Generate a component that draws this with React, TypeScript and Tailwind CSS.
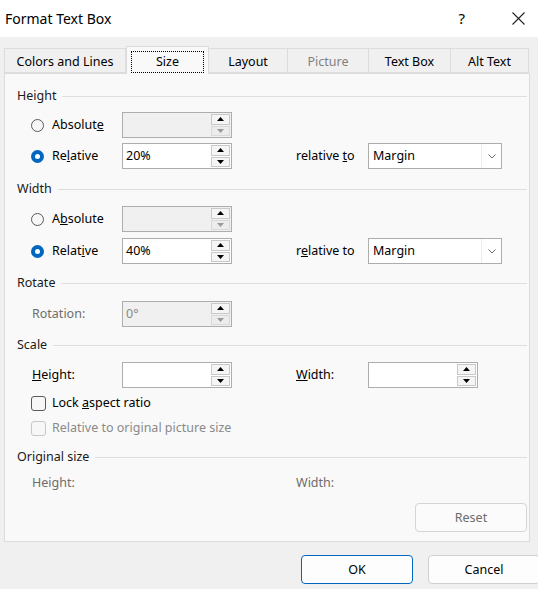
import React from "react";

function Up({ color = "#000" }: { color?: string }) {
  return (
    <svg width="7" height="4" viewBox="0 0 7 4">
      <path d="M0 4 L3.5 0 L7 4 Z" fill={color} />
    </svg>
  );
}
function Down({ color = "#000" }: { color?: string }) {
  return (
    <svg width="7" height="4" viewBox="0 0 7 4">
      <path d="M0 0 L3.5 4 L7 0 Z" fill={color} />
    </svg>
  );
}

function Spin({ disabled = false }: { disabled?: boolean }) {
  return (
    <div className="flex flex-col w-[19px] h-[22px] gap-px">
      <div className="flex-1 flex items-center justify-center border border-[#c9c9c9] bg-[#f5f5f5]">
        <Up />
      </div>
      <div
        className={
          disabled
            ? "flex-1 flex items-center justify-center border border-[#d9d9d9] bg-[#ececec]"
            : "flex-1 flex items-center justify-center border border-[#c9c9c9] bg-[#f5f5f5]"
        }
      >
        <Down color={disabled ? "#9a9a9a" : "#000"} />
      </div>
    </div>
  );
}

function SpinInput({ value = "", disabled = false, grey = false }: { value?: string; disabled?: boolean; grey?: boolean }) {
  return (
    <div
      className={
        disabled
          ? "w-[110px] h-[26px] border border-[#adadad] bg-[#f0f0f0] flex items-center pl-[3px] pr-[1px]"
          : "w-[110px] h-[26px] border border-[#adadad] bg-white flex items-center pl-[3px] pr-[1px]"
      }
    >
      <span className={grey ? "flex-1 text-[#8a8a8a]" : "flex-1 text-black"}>{value}</span>
      <Spin disabled={disabled} />
    </div>
  );
}

function Radio({ checked }: { checked: boolean }) {
  return checked ? (
    <div className="w-[13px] h-[13px] rounded-full bg-[#0067c0] flex items-center justify-center">
      <div className="w-[5px] h-[5px] rounded-full bg-white" />
    </div>
  ) : (
    <div className="w-[13px] h-[13px] rounded-full border border-[#5a5a5a] bg-[#f7f7f7]" />
  );
}

function Header({ children }: { children: React.ReactNode }) {
  return (
    <div className="flex items-center h-[26px] pl-[12px] pr-[2px]">
      <span className="text-[#1a1a1a]">{children}</span>
      <div className="flex-1 h-px bg-[#dedede] ml-[6px]" />
    </div>
  );
}

function Dropdown() {
  return (
    <div className="w-[134px] h-[26px] border border-[#adadad] bg-white flex items-center pl-[4px]">
      <span className="flex-1 text-black">Margin</span>
      <div className="w-[20px] h-[24px] border-l border-[#ececec] flex items-center justify-center">
        <svg width="8" height="5" viewBox="0 0 8 5">
          <path d="M0.5 0.5 L4 4 L7.5 0.5" fill="none" stroke="#6a6a6a" strokeWidth="1" />
        </svg>
      </div>
    </div>
  );
}

function RadioRow({
  checked,
  label,
  value,
  disabled,
  mt,
  relLabel,
}: {
  checked: boolean;
  label: React.ReactNode;
  value?: string;
  disabled?: boolean;
  mt: string;
  relLabel?: React.ReactNode;
}) {
  return (
    <div className={"flex items-center h-[26px] " + mt}>
      <div className="w-[26px]" />
      <Radio checked={checked} />
      <div className="w-[8px]" />
      <span className="w-[70px] text-black">{label}</span>
      <SpinInput value={value} disabled={disabled} />
      {relLabel ? (
        <>
          <div className="w-[64px]" />
          <span className="w-[72px] text-black">{relLabel}</span>
          <Dropdown />
        </>
      ) : null}
    </div>
  );
}

function Checkbox({ disabled = false }: { disabled?: boolean }) {
  return (
    <div
      className={
        disabled
          ? "w-[15px] h-[15px] rounded-[3px] border border-[#c8c8c8] bg-[#f7f7f7]"
          : "w-[15px] h-[15px] rounded-[3px] border border-[#5a5a5a] bg-[#f7f7f7]"
      }
    />
  );
}

export default function App() {
  const tabs: { label: string; w: string; selected?: boolean; disabled?: boolean }[] = [
    { label: "Colors and Lines", w: "w-[122px]" },
    { label: "Size", w: "w-[83px]", selected: true },
    { label: "Layout", w: "w-[79px]" },
    { label: "Picture", w: "w-[81px]", disabled: true },
    { label: "Text Box", w: "w-[82px]" },
    { label: "Alt Text", w: "w-[78px]" },
  ];
  return (
    <div className="w-[538px] h-[589px] overflow-hidden bg-[#f0f0f0] flex flex-col font-['Noto_Sans',sans-serif] text-[12.5px] leading-none">
      {/* Title bar */}
      <div className="h-[37px] bg-white flex items-center shrink-0">
        <span className="ml-[5px] text-[14px] text-black">Format Text Box</span>
        <div className="flex-1" />
        <span className="text-[15px] text-black mr-[47px]">?</span>
        <svg width="13" height="13" viewBox="0 0 13 13" className="mr-[13px]">
          <path d="M0.5 0.5 L12.5 12.5 M12.5 0.5 L0.5 12.5" stroke="#222" strokeWidth="1.1" />
        </svg>
      </div>

      {/* Tabs */}
      <div className="flex items-start ml-[4px] mt-[9px] h-[27px] shrink-0 relative z-10">
        {tabs.map((t) =>
          t.selected ? (
            <div
              key={t.label}
              className={t.w + " h-[28px] bg-[#f9f9f9] border border-b-0 border-[#dcdcdc] flex items-center justify-center pt-[2px]"}
            >
              <div className="w-[73px] h-[22px] border border-dotted border-black flex items-center justify-center text-black pt-[1px]">
                {t.label}
              </div>
            </div>
          ) : (
            <div
              key={t.label}
              className={
                t.w +
                " h-[25px] mt-[2px] pt-[3px] bg-[#f0f0f0] border border-[#dcdcdc] border-l-0 first:border-l flex items-center justify-center " +
                (t.disabled ? "text-[#808080]" : "text-black")
              }
            >
              {t.label}
            </div>
          )
        )}
      </div>

      {/* Panel */}
      <div className="ml-[4px] w-[526px] h-[469px] shrink-0 border border-[#dcdcdc] bg-[#f9f9f9] flex flex-col pt-[9px]">
        <Header>Height</Header>
        <RadioRow
          checked={false}
          mt="mt-[3px]"
          disabled
          label={
            <>
              Absolut<u>e</u>
            </>
          }
        />
        <RadioRow
          checked
          mt="mt-[5px]"
          value="20%"
          label={
            <>
              Re<u>l</u>ative
            </>
          }
          relLabel={
            <>
              relative <u>t</u>o
            </>
          }
        />

        <div className="mt-[7px]">
          <Header>Width</Header>
        </div>
        <RadioRow
          checked={false}
          mt="mt-[4px]"
          disabled
          label={
            <>
              A<u>b</u>solute
            </>
          }
        />
        <RadioRow
          checked
          mt="mt-[6px]"
          value="40%"
          label={
            <>
              Relat<u>i</u>ve
            </>
          }
          relLabel={
            <>
              r<u>e</u>lative to
            </>
          }
        />

        <div className="mt-[6px]">
          <Header>Rotate</Header>
        </div>
        <div className="flex items-center h-[26px] mt-[5px]">
          <div className="w-[27px]" />
          <span className="w-[90px] text-[#6d6d6d]">Rotation:</span>
          <SpinInput value="0°" disabled grey />
        </div>

        <div className="mt-[5px]">
          <Header>Scale</Header>
        </div>
        <div className="flex items-center h-[26px] mt-[4px]">
          <div className="w-[27px]" />
          <span className="w-[90px] text-black">
            <u>H</u>eight:
          </span>
          <SpinInput />
          <div className="w-[64px]" />
          <span className="w-[72px] text-black">
            <u>W</u>idth:
          </span>
          <SpinInput />
        </div>
        <div className="flex items-center h-[22px] mt-[4px]">
          <div className="w-[26px]" />
          <Checkbox />
          <div className="w-[6px]" />
          <span className="text-black">
            Lock <u>a</u>spect ratio
          </span>
        </div>
        <div className="flex items-center h-[22px] mt-[3px]">
          <div className="w-[26px]" />
          <Checkbox disabled />
          <div className="w-[6px]" />
          <span className="text-[#8a8a8a]">Relative to original picture size</span>
        </div>

        <div className="mt-[5px]">
          <Header>Original size</Header>
        </div>
        <div className="flex items-center h-[26px]">
          <div className="w-[27px]" />
          <span className="w-[264px] text-[#6d6d6d]">Height:</span>
          <span className="text-[#6d6d6d]">Width:</span>
        </div>

        <div className="flex justify-end mt-[7px] pr-[2px]">
          <div className="w-[112px] h-[29px] pt-[2px] rounded-[4px] border border-[#d5d5d5] bg-[#fbfbfb] flex items-center justify-center text-[#6d6d6d]">
            Reset
          </div>
        </div>
      </div>

      {/* Buttons */}
      <div className="flex mt-[13px] ml-[301px] gap-[15px] shrink-0">
        <div className="w-[112px] h-[29px] pt-[2px] shrink-0 rounded-[4px] border border-[#0067c0] bg-[#fdfdfd] flex items-center justify-center text-black">
          OK
        </div>
        <div className="w-[112px] h-[29px] pt-[2px] shrink-0 rounded-[4px] border border-[#d0d0d0] bg-[#fdfdfd] flex items-center justify-center text-black">
          Cancel
        </div>
      </div>
    </div>
  );
}
